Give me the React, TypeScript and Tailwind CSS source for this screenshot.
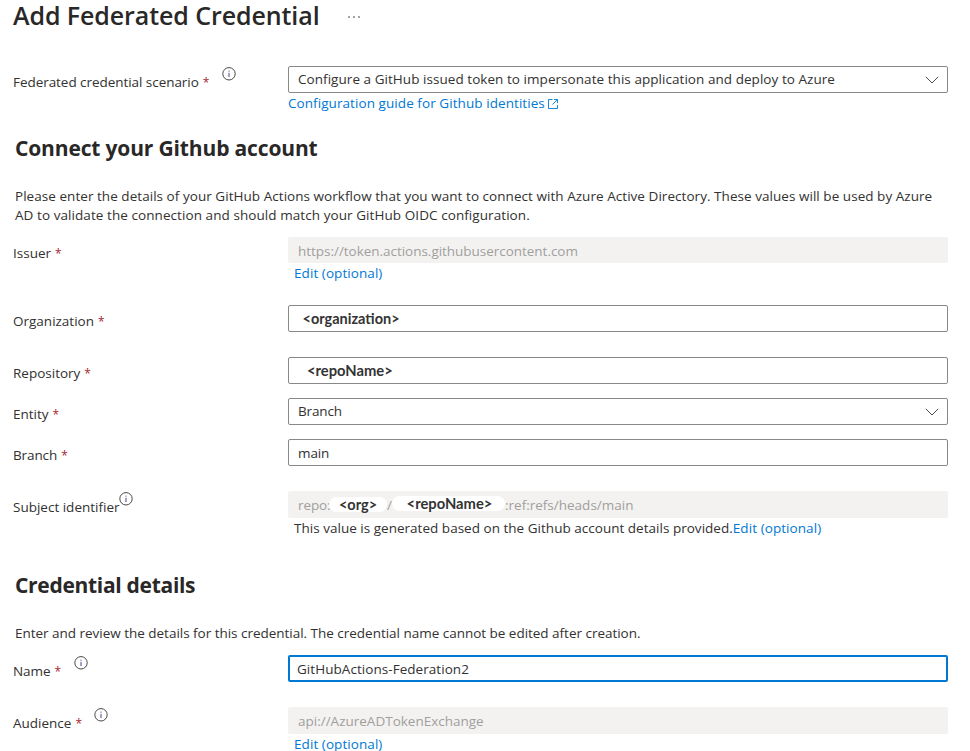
import type { ReactNode } from 'react';

function InfoIcon({ className = '' }: { className?: string }) {
  return (
    <svg className={`shrink-0 ${className}`} width="14" height="14" viewBox="0 0 14 14" fill="none">
      <circle cx="7" cy="6.8" r="6.2" stroke="#4a4846" strokeWidth="1" />
      <path d="M7 5.8v4.2" stroke="#4a4880" strokeWidth="1" />
      <path d="M7 3.6v1.1" stroke="#4a4880" strokeWidth="1" />
    </svg>
  );
}

function Chevron() {
  return (
    <svg className="shrink-0" width="14" height="8" viewBox="0 0 14 8" fill="none">
      <path d="M0.8 0.8 7 7 13.2 0.8" stroke="#4f4d4b" strokeWidth="1" />
    </svg>
  );
}

function ExternalIcon() {
  return (
    <svg className="ml-[3px] shrink-0" width="11" height="12" viewBox="0 0 11 12" fill="none" stroke="#0078d4" strokeWidth="0.9">
      <path d="M4.5 1.5h-4v9h9V7" />
      <path d="M6 1.5h3.5v3.6M9.5 1.5 4.5 6.5" />
    </svg>
  );
}

type RowProps = {
  label: string;
  required?: boolean;
  info?: string;
  className: string;
  children: ReactNode;
};

function Row({ label, required = true, info, className, children }: RowProps) {
  return (
    <div className={`flex items-start ${className}`}>
      <div className="flex h-8 w-[275px] shrink-0 items-center whitespace-nowrap">
        <span>{label}</span>
        {required && <span className="mt-[2px] ml-[4px] w-[6px] text-xs text-[#a4262c]">*</span>}
        {info && <InfoIcon className={info} />}
      </div>
      <div className="w-[660px] shrink-0">{children}</div>
    </div>
  );
}

const fieldBase = 'flex h-[27px] items-center whitespace-nowrap rounded-[2px]';
const bordered = `${fieldBase} border border-[#8a8886] pl-[9px]`;
const disabledColors = 'flex items-center whitespace-nowrap rounded-[2px] bg-[#f3f2f1] px-[10px] text-[#a19f9d]';
const disabled = `${disabledColors} h-[27px] pt-px`;
const mask = 'flex items-center justify-center rounded-full bg-white font-["Lato",sans-serif] font-bold text-[#333]';

export default function App() {
  return (
    <main className="h-[751px] w-[970px] overflow-hidden bg-white pl-[13px] font-['Open_Sans','Noto_Sans',sans-serif] text-[13.5px] leading-[19px] text-[#323130]">
      <header className="flex h-[66px] items-start whitespace-nowrap">
        <h1 className="text-[25px] leading-[30px] font-semibold tracking-[-0.09px] text-[#292827]">Add Federated Credential</h1>
        <svg className="mt-[15px] ml-[27.5px]" width="14" height="4" viewBox="0 0 14 4" fill="#323130">
          <circle cx="2" cy="2" r="0.8" />
          <circle cx="7" cy="2" r="0.8" />
          <circle cx="12" cy="2" r="0.8" />
        </svg>
      </header>

      <Row label="Federated credential scenario" info="mb-[17px] ml-[13px]" className="h-[66px] tracking-[-0.05px]">
        <div className={`${bordered} justify-between pr-[8px]`}>
          <span className="tracking-[0.05px]">Configure a GitHub issued token to impersonate this application and deploy to Azure</span>
          <Chevron />
        </div>
        <a className="mt-px flex items-center whitespace-nowrap text-[#0078d4]">
          <span className="tracking-[0.07px]">Configuration guide for Github identities</span>
          <ExternalIcon />
        </a>
      </Row>

      <h2 className="ml-0.5 h-[55px] text-[21px] leading-8 font-bold tracking-[-0.15px] text-[#292827]">Connect your Github account</h2>
      <p className="ml-0.5 h-[50px] whitespace-nowrap tracking-[0.045px]">
        Please enter the details of your GitHub Actions workflow that you want to connect with Azure Active Directory. These values will be used by Azure
        <br />
        <span className="tracking-[0.07px]">AD to validate the connection and should match your GitHub OIDC configuration.</span>
      </p>

      <Row label="Issuer" className="h-[68px]">
        <div className={`${disabledColors} h-[26px] pt-[2px] tracking-[-0.03px]`}>https://token.actions.githubusercontent.com</div>
        <a className="mt-px ml-[6px] block tracking-[0.07px] text-[#0078d4]">Edit (optional)</a>
      </Row>
      <Row label="Organization" className="h-[52px]">
        <div className={bordered}>
          <span className="mb-px ml-[4.5px] font-['Lato',sans-serif] text-[14.5px] font-bold text-[#333]">&lt;organization&gt;</span>
        </div>
      </Row>
      <Row label="Repository" className="h-[41px]">
        <div className={bordered}>
          <span className="mb-px ml-[9px] font-['Lato',sans-serif] text-[14.75px] font-bold text-[#333]">&lt;repoName&gt;</span>
        </div>
      </Row>
      <Row label="Entity" className="h-[41px]">
        <div className={`${bordered} justify-between pr-[8px]`}>
          <span className="tracking-[-0.15px]">Branch</span>
          <Chevron />
        </div>
      </Row>
      <Row label="Branch" className="h-[52px] tracking-[-0.1px]">
        <div className={`${bordered} pt-[2px]`}>main</div>
      </Row>
      <Row label="Subject identifier" required={false} info="mb-[17px] -ml-px" className="h-[78px]">
        <div className={disabled}>
          <span className="w-[31px] tracking-[-0.1px]">repo:</span>
          <span className={`${mask} mb-[2px] h-[15px] w-[58px] text-[14.5px]`}>&lt;org&gt;</span>
          <span className="w-[5px]">/</span>
          <span className={`${mask} mb-[3px] h-[15px] w-[113px] pl-[2px] text-[14.75px]`}>&lt;repoName&gt;</span>
          <span>:ref:refs/heads/main</span>
        </div>
        <p className="mt-px ml-[6px] whitespace-nowrap">
          <span className="tracking-[0.02px]">This value is generated based on the Github account details provided.</span>
          <a className="tracking-[0.07px] text-[#0078d4]">Edit (optional)</a>
        </p>
      </Row>

      <h2 className="ml-0.5 h-[55px] text-[21px] leading-8 font-bold tracking-[-0.3px] text-[#292827]">Credential details</h2>
      <p className="ml-0.5 h-[31px] whitespace-nowrap tracking-[-0.02px]">Enter and review the details for this credential. The credential name cannot be edited after creation.</p>

      <Row label="Name" info="mb-[17px] ml-[13px]" className="h-[52px] tracking-[-0.05px]">
        <div className={`${fieldBase} border-2 border-[#0078d4] pt-[2px] pl-[7px] tracking-[0.05px]`}>GitHubActions-Federation2</div>
      </Row>
      <Row label="Audience" info="mb-[17px] ml-[13px]" className="h-[44px]">
        <div className={disabled}>api://AzureADTokenExchange</div>
        <a className="mt-[3px] ml-[6px] block leading-[14px] tracking-[0.07px] text-[#0078d4]">Edit (optional)</a>
      </Row>
    </main>
  );
}
